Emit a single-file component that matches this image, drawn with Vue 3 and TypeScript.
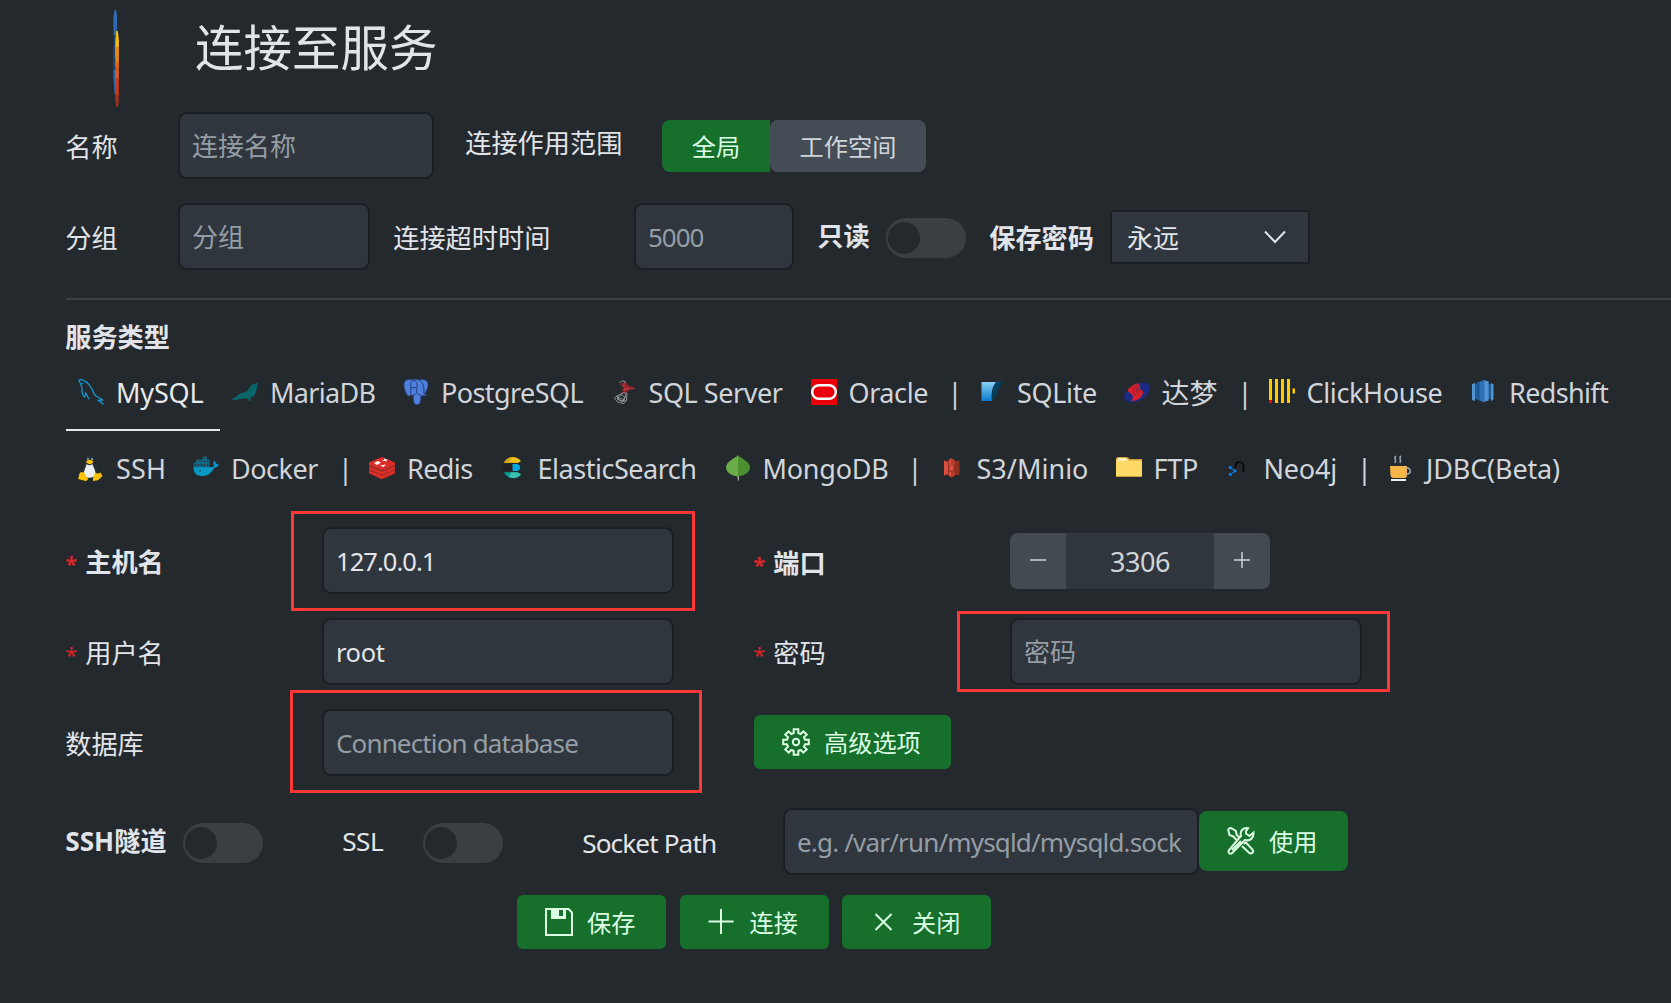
<script setup lang="ts">
import { ref } from 'vue'

interface ServiceTab {
  label: string
  icon?: string
  width: number
  textWidth?: number
}

// Spreads a label over a fixed advance by adjusting its letter spacing.
const vFit = {
  mounted(el: HTMLElement, binding: { value?: number }) {
    if (!binding.value) return
    const natural = el.getBoundingClientRect().width
    const count = (el.textContent ?? '').trim().length
    el.style.letterSpacing = `${(binding.value - natural) / count}px`
  },
}

const icons: Record<string, string> = {
  mysql:
    '<g fill="none" stroke="#159bd7" stroke-width="1.2" stroke-linejoin="round"><path d="M.5 1.200C3 .2 5.300 .9 7 2.400c1.500.8 2.800 1.600 4 3.300 2.400 3 4 6 5.200 9.300 1.200 2.200 3.600 3.300 6 4.200l2.800 2-5-.2c1.500 1.400 4 2.200 5.400 4.300"/><path d="M.6 1.200 2.300 4c.3 1.700.9 3 1.700 4.600-.4 3 .1 5.400 1 7.500.6 1.400 1.600 2.300 2 1.500.5-1.200.3-2.600.7-4 1 2.500 1.800 4.500 3.500 6.600"/><path d="M4 4.200l1 .8"/></g>',
  maria:
    '<path fill="#08656a" d="M25.600 4.200c-.7-.4-1.600.4-3 .5-3 .2-3.800 1.800-5.400 4.500-1.300 2.200-2.700 3.500-5.300 4.200-3.800.8-6.600 2.300-8.100 4.500-.9 1-2.400 1-3.600 1.800l.8 1.500 2.400-.4 1.800.2c2-1.300 5-1.500 7.500-1.500l2.300-.1c1 .6 2 1.700 2.700 2.500l1.500-.2-1.100-2.400c3.700-1.600 5.400-3.600 6-6.700.5-2.400 1.500-4.600 1.500-8.400z"/>',
  postgres:
    '<path fill="#4f80df" stroke="#26427a" stroke-width=".8" d="M7 .8C2.800-.2.7 3 1 6.500c.3 4 2 8.500 4 10.200 1.200 1 2-.2 2.800-1 .7.600 1.700.8 2.700.600-.2 2.800-.2 5.800.7 7.700 1.300 2.400 5.200 2.200 6-.8.5-2.300.6-4.600.9-6.500 2.300.2 5.300-.2 6.600-1.200-1.500-.2-2.700.2-3.300-.6 2.700-3.500 4.700-9 3-11.800C22.700.3 19 .1 16.500 1 13.300.1 10 .1 7 .8z"/><path fill="none" stroke="#203b73" stroke-width="1" d="M8.600 2.500C7 5.500 8 9 7.900 15.200M8.700 1.600C12 .7 14 3 14.200 6.500c-.2 3-1.100 5-.6 7.300.8 2 3 1.600 4.500 2.500M16.500 1.300c3.800 2.500 5 6.500 4.300 13.100M8 9c2-.8 4-.5 5.500 0M10.600 16l2-1.300"/>',
  sqlserver:
    '<g transform="translate(3 0)"><path fill="#84262b" d="M6 5l5-2 3.500 3.300 7.300 3-6 1.600-5.300 3.600L7.500 15 10 9z"/><path fill="none" stroke="#d6393f" stroke-width=".7" d="M8 6l5 4 7-.6M10 4.500L10.500 12l4-5M8 11l6-1"/><path fill="none" stroke="#a4a8aa" stroke-width=".8" d="M5.500 4l2-2 3.500.3.500 2M1.500 18l8-4.300 3.500.5-.5 7.500-3 2.800-6-1.500L.6 19.500zM3 16l2 5 7 1M8 14l-5 6 6 3 3-8M6 15l6 4M3 18l8 3"/></g>',
  oracle:
    '<path fill="#e8000b" d="M0 0h26v26H0z"/><rect x="1.200" y="6.200" width="23.600" height="13.600" rx="6.800" fill="none" stroke="#fff" stroke-width="2.400"/>',
  sqlite:
    '<defs><linearGradient id="sqliteFill" x2="0" y2="1"><stop stop-color="#8bd1f4"/><stop offset="1" stop-color="#087acb"/></linearGradient></defs><path fill="url(#sqliteFill)" d="M2.500 3h15C13 8 12 14 13 22H2.500z"/><path fill="#033f5e" d="M16.500 3.600c2-2 4.300-2.400 5.500-1 1.200 2.400-1.700 5.700-3 8.400-1.300 3-1.900 6-4.600 10l-1.100.6c-.2-7-.4-12.800 3.200-18z"/>',
  dameng:
    '<ellipse cx="13" cy="13.500" rx="14" ry="8.300" transform="rotate(-30 13 13.500)" fill="#1c2b83"/><path fill="#d91f2b" d="M4.500 9.500C7 7 11 4.700 14 4.300c4 2-.5 5.700 5 8 1 1-1 4.700-3.500 7.200C13 21 9.500 22.500 7 22c4-4.500 1-6.500-1-8-2-.8-2.700-2.500-1.500-4.500z"/><path fill="none" stroke="#7a2238" stroke-width=".8" d="M7 8.200c5 2 0 6 5.200 8.500M9.700 6.500c5 2 0 6.500 5.400 9M12 5.200c5 2.300 0 6.300 5.400 8.700"/>',
  clickhouse:
    '<path fill="#fc0" d="M0 0h3v21H0zM6 0h3v24H6zM12 0h3v24h-3zM18 0h3v24h-3zM23.500 9.500H26v5h-2.500z"/><path fill="red" d="M0 21h3v3H0z"/>',
  redshift:
    '<path fill="#205b98" d="M2 5h20v15H2z"/><path fill="#5294cf" d="M1 5l3-1v18l-3-1zM20 4l2.500 1.500v15L20 22z"/><path fill="#2e73b8" d="M5.500 4l7-3 5 1.500v19l-5 1.800-7-3.300z"/><path fill="#1d5790" d="M5.500 4l3-1.300v19l-3-1.700z"/><path fill="#5294cf" d="M13.500 1.300l4 1.400v18.600l-4 1.500z"/>',
  ssh:
    '<path fill="#263238" d="M8 6c-.5-8 8-8.500 8-1 .2 5 5 8 3.500 15l-3 4H8L4 20c0-6 4-7.500 4-14z"/><path fill="#eceff1" d="M8.500 9c2 1.800 4.300 1.800 6 0 1 4 3.300 6.300 3 11-1.500 3-8.500 4-11.500 1-1-5 2-8 2.500-12z"/><path fill="#ffc107" d="M8 6.600c1.700-2 5.700-2 7.300 0-1.200 3.500-5.300 3.500-7.300 0zM1.500 18.300c2-2 4.200-2 5.700 1.500l3 4.300-2 2-8-2zM17 17.500c2 1.600 4 1 5.500 0l2 3.500-4.500 4.200-5 .8c-.5-3.200 1.200-5.200 2-8.500z"/><circle cx="10" cy="4" r=".8" fill="#fff"/><circle cx="14" cy="4" r=".8" fill="#fff"/>',
  docker:
    '<path fill="#0798c6" d="M.6 12H19c2 .2 2.300-2.600 1-4.600l1-1.500c1.700.8 2.400 2 2.500 3.200l2.500.4c-1 2.400-2.600 3-5 3.400C18.500 18 14.500 21 9 21 3.500 21 .2 18 .6 12z"/><g fill="#24414c" stroke="#0c7ca0" stroke-width=".8"><path d="M1 8h15v4H1zM4 5h12v3H4zM10 2h3v3h-3z"/><path d="M4 5v7M7 5v7M10 5v7M13 2v10"/></g><circle cx="7" cy="16" r=".8" fill="#24292e"/>',
  redis:
    '<path fill="#a82c27" d="M0 8v10.500l12.800 6L26 18.500V8L13 2z"/><path fill="#d82e27" d="M0 7.500L13 2l13 5.500v2L13 15 0 9.500z"/><path fill="none" stroke="#e12f28" stroke-width="2" d="M.5 13L13 18.300 25.500 13M.5 17L13 22.300 25.500 17"/><path fill="#fff" d="M5 8l4-2 3 1.500L8 10zM13 5.500l2-.8.3-1.500 1.500 1.200 2-.2-1.500 1.300L18 6.500l-2-.5zM11 10.500l6-1-2.500 2.500z"/>',
  elastic:
    '<path fill="#f0bf1a" d="M4 7.800C7 1 16 .2 21 6l-3.200 2z"/><path fill="#d5a817" d="M4 7.800C6 4 10 2 12.500 2.600L9 7.800z"/><path fill="#231f24" d="M2.600 9h12v7h-12z"/><path fill="#07a5de" d="M12.500 9h5c3.500 1.600 3.500 5.300 0 7h-5z"/><path fill="#009b91" d="M4 17.200h13.500l3.500 2.300c-4 5.200-13.400 5.200-17-2.300z"/><path fill="#3ebeb0" d="M11 17.200h6.500l3.500 2.300c-3 3.500-8 4.500-12 2.800z"/>',
  mongo:
    '<path fill="#6cac48" d="M13 0C11 3 1 6 1 12.500 1 18 7.500 20.500 12 21.500l1-.2z"/><path fill="#4b8f30" d="M13 0c1.700 3 12 6 12 12.500 0 5.500-7 8-11.500 9H13z"/><path fill="#c2bfbf" d="M12.500 21h1.200l.2 4.500h-1z"/>',
  s3:
    '<path fill="#8d3123" d="M5 5.500l3 .8L12.500 3l4.500 3.300 3.500-.8v15l-3.500-1-4.500 3L8 19.500l-3 1z"/><path fill="#dd4b3c" d="M5 5.500l4 1.500v12l-4 1.500zM10 5l2.500-2v7H10zM10 16.500h2.500v6l-2.500-2z"/><path fill="#b93c2d" d="M12.500 3L16 5.500V10h-3.500zM12.500 16.500H16V20l-3.500 2.500z"/><path fill="#e05243" d="M10.500 10.500h4v5h-4z"/>',
  ftp:
    '<path fill="#ce9d38" d="M2 2h9l3 2h12v18H0V3z"/><path fill="#ffd968" d="M1 4h9l4 1.500h12V21H0V5z"/><path fill="#fff0bc" d="M2 3h8l2 1.500-3 1.500H2z"/>',
  neo4j:
    '<path fill="none" stroke="#050708" stroke-width="1.900" d="M9.500 13v-2c0-5.300 8-5.300 8 .5v5.200"/><g fill="#0884f7" stroke="#0884f7"><circle cx="4.200" cy="12.500" r="1.100"/><circle cx="9" cy="16" r="1.100"/><circle cx="4.200" cy="19.500" r="1.100"/><path d="M4.200 12.500L9 16l-4.800 3.500" fill="none"/></g>',
  jdbc:
    '<path fill="#f4b648" d="M2 11h17v9c0 3-2 3-4 3H7c-3 0-4-.5-4.500-3z"/><path fill="none" stroke="#91a7b0" stroke-width="1.700" d="M18.500 13c5-.5 5 6.500 0 6"/><path fill="#eceff1" d="M3 24h15v2H3z"/><path fill="none" stroke="#91a7b0" stroke-width="1.600" d="M8 1c-3 2 1 3-1 7M13 1c-3 2 1 3-1 7"/>',
}

const tabRows: ServiceTab[][] = [
  [
    { label: 'MySQL', icon: 'mysql', width: 154, textWidth: 87.5 },
    { label: 'MariaDB', icon: 'maria', width: 171, textWidth: 105.5 },
    { label: 'PostgreSQL', icon: 'postgres', width: 207.5, textWidth: 142 },
    { label: 'SQL Server', icon: 'sqlserver', width: 200, textWidth: 134 },
    { label: 'Oracle', icon: 'oracle', width: 144.5, textWidth: 79.5 },
    { label: '|', width: 24 },
    { label: 'SQLite', icon: 'sqlite', width: 144.5, textWidth: 80 },
    { label: '达梦', icon: 'dameng', width: 122 },
    { label: '|', width: 23 },
    { label: 'ClickHouse', icon: 'clickhouse', width: 202.5, textWidth: 136 },
    { label: 'Redshift', icon: 'redshift', width: 170, textWidth: 99 },
  ],
  [
    { label: 'SSH', icon: 'ssh', width: 115, textWidth: 50 },
    { label: 'Docker', icon: 'docker', width: 153, textWidth: 87 },
    { label: '|', width: 23 },
    { label: 'Redis', icon: 'redis', width: 130.5, textWidth: 65.5 },
    { label: 'ElasticSearch', icon: 'elastic', width: 225, textWidth: 159 },
    { label: 'MongoDB', icon: 'mongo', width: 191, textWidth: 126 },
    { label: '|', width: 23 },
    { label: 'S3/Minio', icon: 's3', width: 177, textWidth: 112 },
    { label: 'FTP', icon: 'ftp', width: 110, textWidth: 44.5 },
    { label: 'Neo4j', icon: 'neo4j', width: 139.5, textWidth: 73.5 },
    { label: '|', width: 23 },
    { label: 'JDBC(Beta)', icon: 'jdbc', width: 200, textWidth: 134 },
  ],
]

const active = ref('MySQL')
const host = ref('127.0.0.1')
const user = ref('root')
const port = ref(3306)
</script>

<template>
  <main class="page">
    <header class="header">
      <svg class="logo" viewBox="0 0 6 97">
        <path fill="#2f6bb5" d="M1.500 0h1.700l.8 7v11L3 30v54H1.500L.4 66V40L1 30 .4 18V8z" />
        <path fill="#1d4069" d="M.6 25h2.200v35H.6z" />
        <path fill="#f4bd12" d="M3.200 21h1.600L5.900 30v14l-3.600 4V32z" />
        <path fill="#ea851c" d="M2.300 38l3.600-2v20l-3.400 1z" />
        <path fill="#dc5b1d" d="M2.600 55l3.200-5v20L2.400 78z" />
        <path fill="#c93a1b" d="M2.300 68h3.500v18H2.200z" />
        <path fill="#9e3222" d="M2.300 84h3.500v6l-.8 7H3.400L2.300 90z" />
      </svg>
      <h1>连接至服务</h1>
    </header>

    <div class="row">
      <label class="label w112 d1">名称</label>
      <div class="input ph w256">连接名称</div>
      <label class="label scope up">连接作用范围</label>
      <div class="segmented">
        <button class="on">全局</button><button class="off">工作空间</button>
      </div>
    </div>

    <div class="row second">
      <label class="label w112 d1">分组</label>
      <div class="input ph w192">分组</div>
      <label class="label timeout d1">连接超时时间</label>
      <div class="input ph w160"><span v-fit="55.5">5000</span></div>
      <label class="label bold readonly u1">只读</label>
      <div class="toggle"></div>
      <label class="label bold keep d1">保存密码</label>
      <div class="select">
        <span>永远</span>
        <svg width="22" height="14" viewBox="0 0 22 14"><path d="M1 1.500l10 10.500L21 1.500" /></svg>
      </div>
    </div>

    <section class="services">
      <h2>服务类型</h2>
      <nav v-for="(row, i) in tabRows" :key="i" class="tabs">
        <div
          v-for="(tab, j) in row"
          :key="j"
          :class="['tab', { active: tab.label === active, sep: !tab.icon }]"
          :style="{ width: tab.width + 'px' }"
          @click="tab.icon && (active = tab.label)"
        >
          <svg v-if="tab.icon" class="ico" viewBox="0 0 26 26" v-html="icons[tab.icon]"></svg>
          <span v-fit="tab.textWidth" :class="{ cjk: tab.label === '达梦' }">{{ tab.label }}</span>
        </div>
      </nav>
    </section>

    <div class="row host">
      <label class="label bold wide d2"><i>*</i>主机名</label>
      <div class="input w352 marked m1"><span v-fit="99.5">{{ host }}</span></div>
      <label class="label bold mid d3"><i>*</i>端口</label>
      <div class="stepper">
        <button @click="port--"><svg viewBox="0 0 16 16"><path d="M0 8h16" /></svg></button>
        <output><span v-fit="60">{{ port }}</span></output>
        <button @click="port++"><svg viewBox="0 0 16 16"><path d="M0 8h16M8 0v16" /></svg></button>
      </div>
    </div>

    <div class="row gap">
      <label class="label wide d2"><i>*</i>用户名</label>
      <div class="input w352"><span v-fit="48.5">{{ user }}</span></div>
      <label class="label mid d2"><i>*</i>密码</label>
      <div class="input ph w352 marked m2">密码</div>
    </div>

    <div class="row gap">
      <label class="label wide d1">数据库</label>
      <div class="input ph w352 marked m3"><span v-fit="242">Connection database</span></div>
      <button class="btn advanced">
        <svg width="28" height="28" viewBox="0 0 28 28">
          <path d="M11.700 1.200h4.600V5l2.400 1 2.700-2.700 3.300 3.300L22 9.300l1 2.400h3.800v4.600H23l-1 2.400 2.700 2.700-3.300 3.300-2.700-2.700-2.400 1v3.800h-4.600V23l-2.400-1-2.700 2.700-3.300-3.300L6 18.700l-1-2.400H1.200v-4.600H5l1-2.400-2.700-2.700 3.300-3.300L9.300 6l2.400-1z" />
          <circle cx="14" cy="14" r="3.200" />
        </svg>
        高级选项
      </button>
    </div>

    <div class="row socket">
      <label class="label bold ssh u1"><span v-fit="49">SSH</span>隧道</label>
      <div class="toggle"></div>
      <label class="label ssl u1"><span v-fit="41">SSL</span></label>
      <div class="toggle"></div>
      <label class="label path d1"><span v-fit="134">Socket Path</span></label>
      <div class="input ph w416"><span v-fit="384">e.g. /var/run/mysqld/mysqld.sock</span></div>
      <button class="btn use">
        <svg width="28" height="28" viewBox="0 0 28 28">
          <path d="M1 2l3-1 5 3 .5 3.500 3.500 4M1 2l1.500 6 4 1.500 3 3.500M17 17l2-1.500 6.500 7c2 3-1.500 5-3.500 3.200L15 19M21 1.200c-5-.8-8.500 3-7 7.800L2 23c-1.500 3 1 4.500 3 3.200L18 13c5 1.500 9-2 8.500-7.500L22.500 9 19 6.500V4.200zM5 23l9-9" />
        </svg>
        使用
      </button>
    </div>

    <footer class="actions">
      <button class="btn">
        <svg width="28" height="28" viewBox="0 0 28 28">
          <path d="M1 1h22.500L27 4.500V27H1zM7 1v9h13V1" /><path class="solid" d="M7 1h7v9H7zM18 1h2v9h-6V8h4z" />
        </svg>
        保存
      </button>
      <button class="btn">
        <svg width="28" height="28" viewBox="0 0 28 28"><path d="M.5 13.500h25M13 1v25" /></svg>
        连接
      </button>
      <button class="btn">
        <svg width="28" height="28" viewBox="0 0 28 28"><path d="M5.500 6l16 16M21.500 6l-16 16" /></svg>
        关闭
      </button>
    </footer>
  </main>
</template>

<style>
body {
  margin: 0;
  background: #24292e;
}
</style>

<style scoped>
.page {
  box-sizing: border-box;
  width: 1671px;
  height: 1003px;
  padding-left: 66px;
  overflow: hidden;
  background: #24292e;
  color: #e1e4e8;
  font: 26px/34px 'Noto Sans', 'Noto Sans CJK SC', sans-serif;
}
.header {
  display: flex;
  height: 112px;
}
.logo {
  width: 6px;
  height: 97px;
  margin: 10px 0 0 47px;
}
h1 {
  margin: 15px 0 0 76px;
  font-size: 48.5px;
  font-weight: 400;
  line-height: 64px;
}
.row {
  display: flex;
  align-items: center;
  height: 67px;
}
.second,
.gap {
  margin-top: 24px;
}
.label,
.input,
.toggle,
.select,
.btn,
.stepper,
.tab,
.ico {
  flex: none;
  box-sizing: border-box;
  white-space: nowrap;
}
.label {
  font-size: 26.2px;
  text-indent: -0.8px;
}
.bold {
  font-weight: 700;
}
.label i {
  display: inline-block;
  width: 20px;
  color: #d9262b;
  font-style: normal;
  font-size: 22px;
  text-indent: 0;
}
.d1 {
  padding-top: 2px;
}
.d2 {
  padding-top: 4px;
}
.d3 {
  padding-top: 5px;
}
.u1 {
  padding-bottom: 2px;
}
.up {
  padding-bottom: 5px;
}
.w112 {
  width: 112px;
}
.scope {
  width: 228px;
  padding-left: 32px;
}
.timeout {
  width: 264px;
  padding-left: 24px;
}
.readonly {
  width: 92px;
  padding-left: 24px;
}
.keep {
  width: 144px;
  padding-left: 24px;
}
.wide {
  width: 256px;
}
.mid {
  width: 336px;
  padding-left: 80px;
}
.input {
  position: relative;
  display: flex;
  align-items: center;
  height: 67px;
  padding: 1px 0 0 12px;
  border: 2px solid #1b1f23;
  border-radius: 9px;
  background: #2f363d;
  font-size: 25.5px;
}
.ph {
  color: #959da5;
  font-size: 26px;
}
.w256 {
  width: 256px;
}
.w192 {
  width: 192px;
}
.w160 {
  width: 160px;
}
.w352 {
  width: 352px;
}
.w416 {
  width: 416px;
}
.marked::after {
  position: absolute;
  box-sizing: border-box;
  border: 3px solid #ff3737;
  content: '';
}
.m1::after {
  inset: -18px -23px -19px -33px;
}
.m2::after {
  inset: -9px -30px -9px -55px;
}
.m3::after {
  inset: -21px -30px -19px -34px;
}
.segmented {
  display: flex;
  margin-top: 1px;
}
button {
  padding: 0;
  border: 0;
  color: #dcffe4;
  background: #176f2c;
  font: inherit;
  font-size: 24.2px;
}
.segmented button {
  height: 52px;
  padding-top: 2px;
}
.on {
  width: 108px;
  border-radius: 8px 0 0 8px;
}
.segmented .off {
  width: 156px;
  border-radius: 8px;
  background: #444d56;
  color: #d1d5da;
}
.toggle {
  width: 80px;
  height: 40px;
  padding: 4px 2px;
  margin-top: 3px;
  border-radius: 20px;
  background: #3a3f43;
}
.toggle::before {
  display: block;
  width: 32px;
  height: 32px;
  border-radius: 50%;
  background: #24292e;
  content: '';
}
.select {
  display: flex;
  align-items: center;
  justify-content: space-between;
  width: 200px;
  height: 54px;
  margin-top: 1px;
  padding: 2px 22px 0 15px;
  border: 2px solid #1b1f23;
  border-radius: 2px;
  background: #2f363d;
}
svg {
  flex: none;
}
.select svg,
.stepper svg,
.btn svg {
  fill: none;
  stroke: currentColor;
  stroke-width: 2;
}
.select svg {
  margin-top: -3px;
}
.services {
  height: 199px;
  margin-top: 28px;
  border-top: 2px solid #3b4045;
  margin-bottom: 28px;
}
h2 {
  height: 55px;
  margin: 0;
  padding-top: 20px;
  box-sizing: border-box;
  font-size: 26.2px;
  font-weight: 700;
  text-indent: -0.8px;
}
.tabs {
  display: flex;
  height: 76px;
}
.tab {
  display: flex;
  align-items: center;
  height: 76px;
  padding: 0 0 0 12px;
  color: #d1d5da;
  font-size: 27px;
}
.tab.active {
  border-bottom: 2px solid #e6e9ec;
  padding-top: 2px;
  color: #e8eaed;
}
.tab.sep {
  justify-content: center;
  padding: 0;
}
.cjk {
  font-size: 28px;
}
.ico {
  width: 26px;
  height: 26px;
  margin: 0 12px 2px 0;
}
.stepper {
  display: flex;
  width: 260px;
  height: 56px;
  overflow: hidden;
  border-radius: 8px;
  background: #2f363d;
  color: #d1d5da;
}
.stepper button {
  display: flex;
  align-items: center;
  justify-content: center;
  width: 56px;
  background: #444a52;
  color: #d1d5da;
}
.stepper svg {
  width: 16px;
  height: 16px;
  margin-top: -1px;
  stroke-width: 1.5;
}
.stepper output {
  display: flex;
  align-items: center;
  justify-content: center;
  flex: 1;
  padding-top: 2px;
  font-size: 27px;
}
.btn {
  display: flex;
  align-items: center;
  gap: 14px;
  width: 149px;
  height: 54px;
  padding: 2px 0 0 28px;
  border-radius: 6px;
}
.btn svg {
  margin-top: -2px;
}
.advanced {
  width: 197px;
  margin: 0 0 2px 80px;
}
.socket {
  margin-top: 32px;
}
.ssh {
  width: 117px;
}
.ssl {
  width: 160px;
  padding-left: 80px;
}
.path {
  width: 280px;
  padding-left: 80px;
}
.use {
  height: 60px;
  margin-bottom: 2px;
  border-radius: 8px;
}
.actions {
  display: flex;
  gap: 13.5px;
  margin: 20px 0 0 451px;
}
.solid {
  fill: currentColor;
  stroke: none;
}
</style>
